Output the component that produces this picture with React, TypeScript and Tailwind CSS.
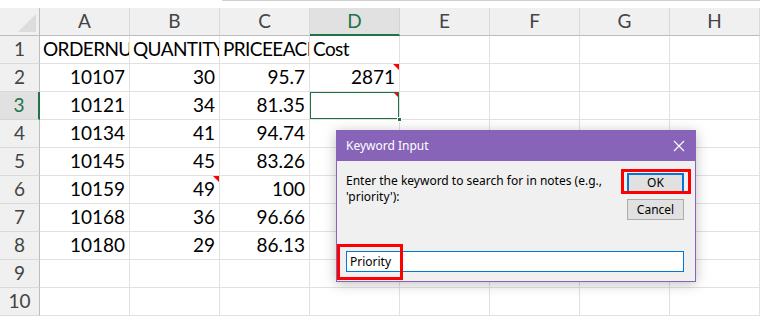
const cols = ['A', 'B', 'C', 'D', 'E', 'F', 'G', 'H'];

const rows: (string | number)[][] = [
  ['ORDERNU', 'QUANTITY', 'PRICEEACH', 'Cost'],
  [10107, 30, 95.7, 2871],
  [10121, 34, 81.35, ''],
  [10134, 41, 94.74],
  [10145, 45, 83.26],
  [10159, 49, 100],
  [10168, 36, 96.66],
  [10180, 29, 86.13],
  [],
  [],
];

// cells with a note marker: "row-col"
const notes = ['2-3', '3-3', '6-1'];

function NoteMark() {
  return (
    <span className="absolute top-0 right-0 w-0 h-0 border-l-[6px] border-l-transparent border-t-[6px] border-t-[#ff0000]" />
  );
}

function CloseIcon() {
  return (
    <svg width="12" height="12" viewBox="0 0 12 12" fill="none" stroke="white" strokeWidth="1.1">
      <path d="M1 1 L11 11 M11 1 L1 11" />
    </svg>
  );
}

export default function App() {
  return (
    <div className="relative w-[760px] h-[318px] bg-white overflow-hidden font-['Lato',sans-serif] text-[19px] text-black">
      <div className="h-[8px] flex">
        <div className="w-[222px]" />
        <div className="flex-1 border-t border-[#d0d0d0]" />
      </div>
      <div className="grid grid-cols-[40px_repeat(8,90px)] auto-rows-[28px]">
        {/* corner */}
        <div className="relative bg-[#f0f0f0] border-r border-b border-[#bdbdbd]">
          <span className="absolute right-[3px] bottom-[3px] w-0 h-0 border-l-[18px] border-l-transparent border-b-[18px] border-b-[#dcdcdc]" />
        </div>
        {cols.map((c) => (
          <div
            key={c}
            className={
              c === 'D'
                ? 'flex items-center justify-center bg-[#e1e1e1] border-r border-r-[#d4d4d4] border-b-2 border-b-[#217346] text-[#217346] pt-[1px]'
                : 'flex items-center justify-center bg-[#f0f0f0] border-r border-r-[#d9d9d9] border-b border-b-[#bdbdbd] text-[#444]'
            }
          >
            {c}
          </div>
        ))}
        {rows.map((r, ri) => {
          const rowNum = ri + 1;
          return [
            <div
              key={`h${rowNum}`}
              className={
                rowNum === 3
                  ? 'flex items-center justify-center bg-[#e1e1e1] border-r-2 border-r-[#217346] border-b border-b-[#d4d4d4] text-[#217346]'
                  : 'flex items-center justify-center bg-[#f0f0f0] border-r border-r-[#bdbdbd] border-b border-b-[#d9d9d9] text-[#444]'
              }
            >
              {rowNum}
            </div>,
            ...cols.map((_, ci) => {
              const v = r[ci];
              const isNum = typeof v === 'number';
              const selected = rowNum === 3 && ci === 3;
              return (
                <div
                  key={`${rowNum}-${ci}`}
                  className={`relative flex items-center border-r border-b border-[#e1e1e1] whitespace-nowrap overflow-hidden ${
                    isNum ? 'justify-end pr-[4px]' : 'justify-start pl-[3px] tracking-[-0.6px]'
                  }`}
                >
                  {v}
                  {notes.includes(`${rowNum}-${ci}`) && <NoteMark />}
                  {selected && (
                    <span className="absolute inset-[-1px] border-2 border-[#217346]" />
                  )}
                </div>
              );
            }),
          ];
        })}
      </div>

      {/* fill handle of selected cell */}
      <span className="absolute left-[397px] top-[117px] w-[5px] h-[5px] bg-[#217346] border border-white" />

      {/* Keyword Input dialog */}
      <div className="absolute left-[336px] top-[130px] w-[360px] h-[152px] flex flex-col border border-[#8764b8] bg-[#f0f0f0] shadow-[0_2px_12px_rgba(0,0,0,0.25)] font-['Noto_Sans',sans-serif] text-[12px]">
        <div className="h-[30px] shrink-0 flex items-center justify-between bg-[#8764b8] pl-[9px] pr-[10px] text-white">
          <span>Keyword Input</span>
          <CloseIcon />
        </div>
        <div className="flex-1 flex flex-col pl-[9px] pr-[11px] pb-[9px]">
          <div className="flex justify-between pt-[12px]">
            <p className="w-[272px] leading-[16px] text-black">
              Enter the keyword to search for in notes (e.g., 'priority'):
            </p>
            <div className="flex flex-col gap-[6px]">
              <button className="w-[57px] h-[20px] flex items-center justify-center bg-[#e1e1e1] border-2 border-[#0078d7] text-black">
                OK
              </button>
              <button className="w-[57px] h-[21px] flex items-center justify-center bg-[#e1e1e1] border border-[#adadad] text-black">
                Cancel
              </button>
            </div>
          </div>
          <div className="mt-auto h-[21px] flex items-center bg-white border border-[#0078d7] pl-[3px] text-black">
            Priority
          </div>
        </div>
      </div>

      {/* red highlight boxes */}
      <span className="absolute left-[621px] top-[169px] w-[70px] h-[25px] border-[3px] border-[#ff0000]" />
      <span className="absolute left-[337px] top-[244px] w-[66px] h-[36px] border-[3px] border-[#ff0000]" />
    </div>
  );
}
